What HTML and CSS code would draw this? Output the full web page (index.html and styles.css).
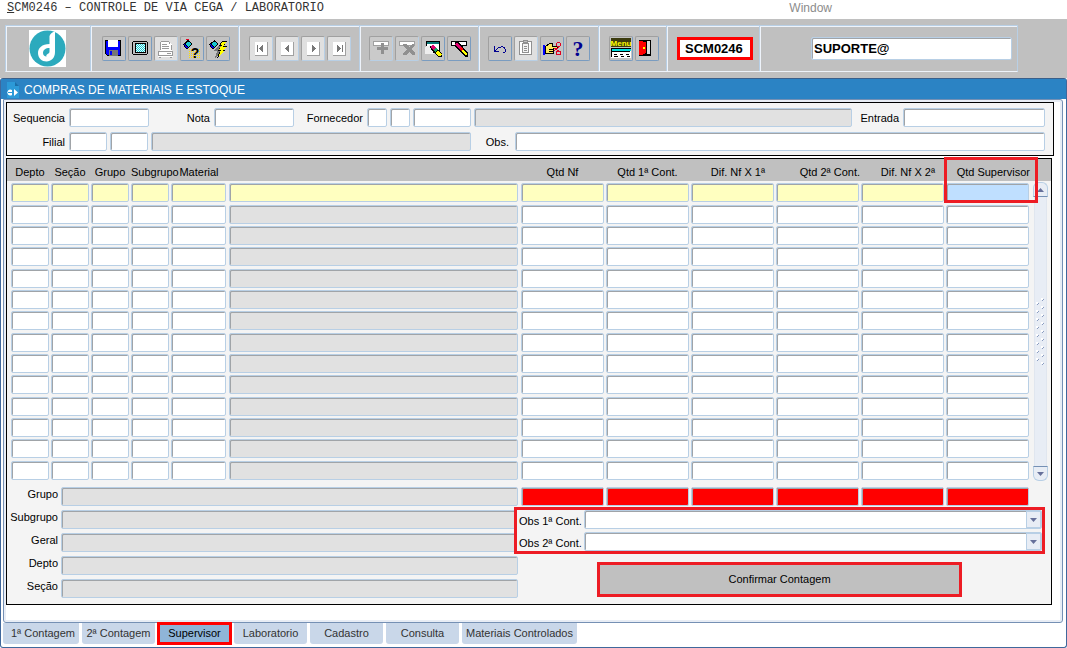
FILE: index.html
```html
<!DOCTYPE html>
<html lang="pt-BR">
<head>
	<meta charset="utf-8">
	<meta name="viewport" content="width=device-width, initial-scale=1">
	<title>SCM0246 - Controle de Via Cega / Laboratorio</title>
	<link rel="stylesheet" href="styles.css">
</head>
<body>

<header class="menubar">
	<a href="#main"><u>S</u>CM0246 – CONTROLE DE VIA CEGA / LABORATORIO</a>
	<a href="#window" class="menu-window">Window</a>
</header>

<div class="toolbar-area">
	<div class="toolbar">
		<div class="group group-logo">
			<svg class="logo" viewBox="0 0 37 37" role="img" aria-label="Logo">
				<circle cx="18.500" cy="18.500" r="18" fill="#2caabd"/>
				<path d="M20.500 6c1-2.500 3-4 5.500-4.500V22c0 6-4 9.500-8.500 9.500S9 28 9 23s4-9 11.500-9z" fill="#fff"/>
				<path d="M20.500 18c-4 0-6.500 2-6.500 5 0 2 1.500 3.500 3.500 3.500-1-3 3-2 3-5z" fill="#2caabd"/>
			</svg>
		</div>

		<div class="group">
			<button class="tool" aria-label="Salvar">
				<svg viewBox="0 0 24 25">
					<path d="M3 4h16v16H5l-2-2z" fill="#000"/>
					<path d="M4 5h14v14H5l-1-1z" fill="#00f"/>
					<path d="M6 4h10v7H6z" fill="#fff"/>
					<path d="M7 14h9v6H7z" fill="#777"/>
					<path d="M8 15h2v4H8z" fill="#00f"/>
				</svg>
			</button>
			<button class="tool" aria-label="Tela">
				<svg viewBox="0 0 24 25">
					<path d="M5 5h14v1h1v12h-1v1H5v-1H4V6h1z" fill="#000"/>
					<path d="M5 6h14v12H5z" fill="#c0c0c0"/>
					<path d="M7 7h11v10H7z" fill="#000"/>
					<path d="M8 8h9v8H8z" fill="#e8ffff"/>
					<path d="M8 8.500h9M8 10.500h9M8 12.500h9M8 14.500h9" stroke="#18c8d0" stroke-dasharray="1 1"/>
					<path d="M9 9.500h8M9 11.500h8M9 13.500h8M9 15.500h8" stroke="#18c8d0" stroke-dasharray="1 1"/>
				</svg>
			</button>
			<button class="tool tool-off" disabled aria-label="Imprimir">
				<svg viewBox="0 0 24 25">
					<path d="M7 6h8l3 3v6H6V6z" fill="#fff"/>
					<path d="M7 5.500h8M15.500 6v2M17.500 9v5M6.500 6v8M8 8.500h5M8 10.500h7M8 12.500h7" stroke="#999"/>
					<path d="M4 15h15v6H4z" fill="#fff"/>
					<path d="M4.500 15.500h14v4h-14zM5 21.500h2M16 21.500h2M13 17.500h4" stroke="#999" fill="none"/>
				</svg>
			</button>
			<button class="tool" aria-label="Entrar consulta">
				<svg viewBox="0 0 24 25">
					<path d="M9 13.500h12M9 15.500h12M9 17.500h12M9 19.500h12M9 21.500h12" stroke="#ffe000" stroke-dasharray="1 1"/>
					<path d="M3 8l5-4 4 4-4 5H6z" fill="#000"/>
					<path d="M4 8l4 4H6z" fill="#00f"/>
					<path d="M7 6h3l1 2-3 3-2-2z" fill="#18c8d0"/>
					<path d="M6 3h3v1H6z" fill="#e00020"/>
					<text x="15" y="22" class="glyph query">?</text>
				</svg>
			</button>
			<button class="tool" aria-label="Executar consulta">
				<svg viewBox="0 0 24 25">
					<path d="M3 8l6-4 3 4-4 5H6z" fill="#000"/>
					<path d="M4 8l4 4H6z" fill="#00f"/>
					<path d="M7 6h3l1 2-3 3-2-2z" fill="#18c8d0"/>
					<path d="M12 10l4-2-2 6h3l-8 8 2-7H8z" fill="#777"/>
					<path d="M16 5h5l-3 5h3l-3 4h2l-9 8 3-7h-2l3-5h-2z" fill="#000"/>
					<path d="M16 6h4l-3 5h3l-3 4h2l-6 5 2-6h-2l3-5h-1z" fill="#ff0"/>
				</svg>
			</button>
		</div>

		<div class="group group-nav">
			<button class="tool tool-off" disabled aria-label="Primeiro">
				<svg viewBox="0 0 24 25">
					<path d="M6 6h12v13H6z" fill="#fff"/><path d="M6 19.500h12.500V6" stroke="#a0a0a0" fill="none"/>
					<path d="M8 9h1v7H8zM14 9v7l-4-3.500z" fill="#777"/>
				</svg>
			</button>
			<button class="tool tool-off" disabled aria-label="Anterior">
				<svg viewBox="0 0 24 25">
					<path d="M6 6h12v13H6z" fill="#fff"/><path d="M6 19.500h12.500V6" stroke="#a0a0a0" fill="none"/>
					<path d="M14 9v7l-4-3.500z" fill="#777"/>
				</svg>
			</button>
			<button class="tool tool-off" disabled aria-label="Próximo">
				<svg viewBox="0 0 24 25">
					<path d="M6 6h12v13H6z" fill="#fff"/><path d="M6 19.500h12.500V6" stroke="#a0a0a0" fill="none"/>
					<path d="M11 9v7l4-3.500z" fill="#777"/>
				</svg>
			</button>
			<button class="tool tool-off" disabled aria-label="Último">
				<svg viewBox="0 0 24 25">
					<path d="M6 6h12v13H6z" fill="#fff"/><path d="M6 19.500h12.500V6" stroke="#a0a0a0" fill="none"/>
					<path d="M10 9v7l4-3.500zM15 9h1v7h-1z" fill="#777"/>
				</svg>
			</button>
		</div>

		<div class="group group-record">
			<button class="tool tool-off tool-flat" disabled aria-label="Inserir registro">
				<svg viewBox="0 0 24 25">
					<path d="M4.500 5.500h15v4h-15z" fill="#fff" stroke="#a0a0a0"/>
					<path d="M12 7h3v4h4v3h-4v4h-3v-4H8v-3h4z" fill="#909090"/>
				</svg>
			</button>
			<button class="tool tool-off tool-flat" disabled aria-label="Excluir registro">
				<svg viewBox="0 0 24 25">
					<path d="M4.500 5.500h15v4h-15z" fill="#fff" stroke="#a0a0a0"/>
					<path d="M8 8h3l3 3 3-3h2v2l-3 3 4 4v2h-3l-3-3-3 3H8v-2l4-4-4-3z" fill="#909090"/>
				</svg>
			</button>
			<button class="tool" aria-label="Limpar bloco">
				<svg viewBox="0 0 24 25">
					<path d="M5.500 5.500h13v11h-13z" fill="#fff" stroke="#000"/>
					<path d="M6 6h12v2H6z" fill="#087878"/>
					<path d="M4 11l5-2 4 9H4z" fill="#eee"/>
					<path d="M9 10l3-1 9 9v3h-4l-7-8z" fill="#000"/>
					<path d="M9 11l3 3 3-2-3-3z" fill="#e00070"/>
					<path d="M12 14l3-2 2 2-3 2z" fill="#18a060"/>
					<path d="M14 17l3-3 4 5-3 1z" fill="#ff0"/>
				</svg>
			</button>
			<button class="tool" aria-label="Limpar registro">
				<svg viewBox="0 0 24 25">
					<path d="M4.500 5.500h15v4h-15z" fill="#fff" stroke="#000"/>
					<path d="M8 6h4l9 11v4h-3L8 10z" fill="#000"/>
					<path d="M9 7h2l3 4-2 2-4-4z" fill="#e00070"/>
					<path d="M12 13l2-2 2 2-2 2z" fill="#f00"/>
					<path d="M14 15l2-2 4 5-1 2z" fill="#ff0"/>
				</svg>
			</button>
		</div>

		<div class="group group-edit">
			<button class="tool" aria-label="Desfazer">
				<svg viewBox="0 0 24 25">
					<path d="M6.500 10v6M6 15.500h5M7 15l3-3c3-2 7-1 7 1v3l-2 1" stroke="#000090" fill="none"/>
				</svg>
			</button>
			<button class="tool tool-off" disabled aria-label="Colar">
				<svg viewBox="0 0 24 25">
					<path d="M5.500 5.500h12v13h-12z" fill="#fff" stroke="#909090"/>
					<path d="M8.500 7.500h6v9h-6z" fill="#f4f4f4" stroke="#909090"/>
					<path d="M9.500 4.500h4v2h-4z" fill="#c0c0c0" stroke="#909090"/>
					<path d="M10 10.500h3M10 12.500h3M10 14.500h3" stroke="#909090"/>
				</svg>
			</button>
			<button class="tool" aria-label="Recortar">
				<svg viewBox="0 0 24 25">
					<path d="M3 9h2v10H3z" fill="#00f"/>
					<path d="M5.500 10.500l4-3h3v3h5v2h-4v5h-8z" fill="#ffe860" stroke="#000"/>
					<path d="M9 13.500h4M9 15.500h4" stroke="#000"/>
					<path d="M14 12l5 3M14 15l5-4" stroke="#e00020"/>
					<circle cx="18.500" cy="8.500" r="2" fill="none" stroke="#e00020"/>
					<circle cx="18.500" cy="17" r="2" fill="none" stroke="#e00020"/>
				</svg>
			</button>
			<button class="tool" aria-label="Ajuda">
				<svg viewBox="0 0 24 25">
					<text x="12" y="20" class="glyph help">?</text>
				</svg>
			</button>
		</div>

		<div class="group group-exit">
			<button class="tool" aria-label="Menu">
				<svg viewBox="0 0 24 25">
					<path d="M2 2h20v9H2z" fill="#3c3c10"/>
					<text x="12" y="10" class="glyph menu">Menu</text>
					<path d="M2 12h20v10H2z" fill="#fff"/>
					<path d="M2 12.500h20M2.500 12v9" stroke="#000"/>
					<path d="M3 14h19" stroke="#00e0e0" stroke-width="2"/>
					<path d="M3 15.500h18M5 18.500h3M11 18.500h3M17 18.500h3M5 20.500h4M12 20.500h3M18 20.500h3" stroke="#000"/>
				</svg>
			</button>
			<button class="tool" aria-label="Sair">
				<svg viewBox="0 0 24 25">
					<path d="M4 4h12v16H4z" fill="#000"/>
					<path d="M5 5h10v13H5z" fill="#ddd"/>
					<path d="M4 5l8-1v14l-5 2H4z" fill="#000"/>
					<path d="M4 5l7 1v11l-4 2H4z" fill="#f00"/>
					<path d="M8 11h2v2H8z" fill="#ff0"/>
				</svg>
			</button>
		</div>

		<div class="group group-code">
			<input class="code" value="SCM0246" aria-label="Programa">
		</div>

		<div class="group group-user">
			<input class="user" value="SUPORTE@" aria-label="Usuário">
		</div>
	</div>
</div>

<main class="window" id="main">
	<h1 class="titlebar">
		<svg viewBox="0 0 14 16" aria-hidden="true">
			<path d="M1 0h8l4 4v12H1z" fill="#2c9ad8"/>
			<path d="M9 0v4h4" fill="#1b6ea8"/>
			<path d="M8 7v7l4-3.500zM6 8a3 3 0 1 0 0 5" fill="#fff"/>
			<path d="M2 10.500h5" stroke="#2c9ad8"/>
		</svg>
		COMPRAS DE MATERIAIS E ESTOQUE
	</h1>

	<div class="canvas">
		<section class="panel panel-head">
			<div class="line">
				<label class="first" for="sequencia">Sequencia</label>
				<input class="w80" id="sequencia">
				<label class="nota" for="nota">Nota</label>
				<input class="w80" id="nota">
				<label class="fornecedor" for="fornecedor">Fornecedor</label>
				<input class="w20" id="fornecedor">
				<input class="w20" aria-label="Fornecedor loja">
				<input class="w58" aria-label="Fornecedor código">
				<input class="grow ro" readonly aria-label="Fornecedor nome">
				<label class="entrada" for="entrada">Entrada</label>
				<input class="w142" id="entrada">
			</div>
			<div class="line">
				<label class="first" for="filial">Filial</label>
				<input class="w38" id="filial">
				<input class="w38" aria-label="Filial código">
				<input class="w320 ro" readonly aria-label="Filial nome">
				<label class="obs" for="obs">Obs.</label>
				<input class="grow" id="obs">
			</div>
		</section>

		<section class="panel panel-items">
			<div class="items">
				<table>
					<colgroup>
						<col class="c-depto"><col class="c-code"><col class="c-code"><col class="c-code">
						<col class="c-material"><col>
						<col class="c-qtd"><col class="c-qtd"><col class="c-qtd"><col class="c-qtd"><col class="c-qtd"><col class="c-qtd">
					</colgroup>
					<thead>
						<tr>
							<th>Depto</th>
							<th>Seção</th>
							<th>Grupo</th>
							<th>Subgrupo</th>
							<th>Material</th>
							<th></th>
							<th>Qtd Nf</th>
							<th>Qtd 1ª Cont.</th>
							<th class="dif">Dif. Nf X 1ª</th>
							<th class="end">Qtd 2ª Cont.</th>
							<th class="dif">Dif. Nf X 2ª</th>
							<th class="end marked">Qtd Supervisor</th>
						</tr>
					</thead>
					<tbody id="rows"></tbody>
				</table>
				<div class="scroll">
					<div class="scroll-head"></div>
					<button class="scroll-btn up" aria-label="Subir"><svg viewBox="0 0 7 4"><path d="M0 4h7L3.500 0z"/></svg></button>
					<div class="track">
						<svg viewBox="0 0 9 68" aria-hidden="true">
							<defs>
								<pattern id="grip" width="9" height="8" patternUnits="userSpaceOnUse">
									<path d="M5 0h2v2H5zM0 4h2v2H0z" fill="#fff"/>
									<path d="M6 2h1V1h1v1H7v1H6zM1 6h1V5h1v1H2v1H1z" fill="#8a9cc0"/>
								</pattern>
							</defs>
							<rect width="9" height="68" fill="url(#grip)"/>
						</svg>
					</div>
					<button class="scroll-btn down" aria-label="Descer"><svg viewBox="0 0 7 4"><path d="M0 0h7L3.500 4z"/></svg></button>
				</div>
			</div>

			<div class="footer">
				<div class="names">
					<label for="n-grupo">Grupo</label><input class="ro" readonly id="n-grupo">
					<label for="n-subgrupo">Subgrupo</label><input class="ro" readonly id="n-subgrupo">
					<label for="n-geral">Geral</label><input class="ro" readonly id="n-geral">
					<label for="n-depto">Depto</label><input class="ro" readonly id="n-depto">
					<label for="n-secao">Seção</label><input class="ro" readonly id="n-secao">
				</div>
				<div class="side">
					<div class="totals">
						<input readonly aria-label="Total Qtd Nf">
						<input readonly aria-label="Total Qtd 1ª Cont.">
						<input readonly aria-label="Total Dif. Nf X 1ª">
						<input readonly aria-label="Total Qtd 2ª Cont.">
						<input readonly aria-label="Total Dif. Nf X 2ª">
						<input readonly aria-label="Total Qtd Supervisor">
					</div>
					<div class="notes">
						<label for="obs1">Obs 1ª Cont.</label>
						<div class="combo">
							<select id="obs1"><option></option></select>
							<span class="arrow"><svg viewBox="0 0 7 4"><path d="M0 0h7L3.500 4z"/></svg></span>
						</div>
						<label for="obs2">Obs 2ª Cont.</label>
						<div class="combo">
							<select id="obs2"><option></option></select>
							<span class="arrow"><svg viewBox="0 0 7 4"><path d="M0 0h7L3.500 4z"/></svg></span>
						</div>
					</div>
					<button class="confirm">Confirmar Contagem</button>
				</div>
			</div>
		</section>
	</div>

	<nav class="tabs">
		<button>1ª Contagem</button>
		<button>2ª Contagem</button>
		<button class="active">Supervisor</button>
		<button>Laboratorio</button>
		<button>Cadastro</button>
		<button>Consulta</button>
		<button>Materiais Controlados</button>
	</nav>
</main>

<script src="rows.js"></script>

</body>
</html>
```

FILE: rows.js
```javascript
var ROWS = 14;
var names = ["Depto", "Seção", "Grupo", "Subgrupo", "Material", "Descrição", "Qtd Nf",
	"Qtd 1ª Cont.", "Dif. Nf X 1ª", "Qtd 2ª Cont.", "Dif. Nf X 2ª", "Qtd Supervisor"];
var body = document.getElementById("rows");

for (var r = 1; r <= ROWS; r++) {
	var tr = body.insertRow();
	names.forEach(function(name, i) {
		var input = document.createElement("input");
		input.setAttribute("aria-label", name + " " + r);
		if (i === 5) {
			input.className = "ro";
			input.readOnly = true;
		}
		tr.insertCell().appendChild(input);
	});
}
```

FILE: styles.css
```css
*, *::after {
	box-sizing: border-box;
}
body {
	margin: 0;
	background: white;
	color: #000;
	font: 11px/15px "Liberation Sans", Arial, sans-serif;
}
button, input, select {
	font: inherit;
	color: inherit;
	margin: 0;
}
svg {
	display: block;
}

/* fields */

input, select {
	height: 19px;
	min-width: 0;
	padding: 0 3px;
	border: 1px solid #b8cfe5;
	border-radius: 2px;
	background: white;
	box-shadow: inset 1px 1px 0 #a0a4a8;
	outline: none;
}
.ro {
	background: #e1e1e1;
}

/* menu bar */

.menubar {
	display: flex;
	justify-content: space-between;
	height: 19px;
	padding: 0 235px 0 7px;
}
.menubar a {
	color: #333;
	text-decoration: none;
	font: 12px/17px "Liberation Mono", "Courier New", monospace;
}
.menubar .menu-window {
	color: #8c8c8c;
	font-family: "Liberation Sans", Arial, sans-serif;
}

/* toolbar */

.toolbar-area {
	padding: 6px 49px 6px 5px;
	background: #c0c0c0;
}
.toolbar {
	display: flex;
	height: 47px;
	border: 1px solid #b8cfe5;
	border-bottom-color: #eef3fa;
	box-shadow: inset 1px 1px 0 #eef3fa;
}
.group {
	display: flex;
	align-items: center;
	gap: 2px;
	padding: 0 9px 0 10px;
	border-right: 1px solid #eef3fa;
	box-shadow: inset -1px 0 0 #b8cfe5;
}
.group-logo {
	width: 86px;
	padding: 0 0 0 23px;
}
.group-nav {
	padding: 0 9px;
}
.group-record {
	padding: 0 8px;
}
.group-edit {
	padding: 0 9px 0 8px;
}
.group-exit {
	padding: 0 8px 0 9px;
}
.group-code {
	width: 93px;
	padding: 0 7px 0 9px;
}
.group-user {
	flex: 1;
	padding: 0 5px 0 50px;
	border: 0;
	box-shadow: none;
}
.logo {
	width: 37px;
	height: 37px;
	background: white;
}
.tool {
	width: 24px;
	height: 25px;
	padding: 0;
	border: 1px solid #a0a0a0;
	border-right-color: #7a9cc0;
	border-bottom-color: #7a9cc0;
	border-radius: 2px;
	background: #c4c4c4;
}
.tool svg {
	width: 24px;
	height: 25px;
	margin: -1px;
	shape-rendering: crispEdges;
}
.tool-off {
	border-right-color: #b8cfe5;
	border-bottom-color: #b8cfe5;
	background: #e0e0e0;
}
.tool-flat {
	background: #cacaca;
}
.glyph {
	font-weight: bold;
	text-anchor: middle;
}
.query {
	font-size: 14px;
}
.help {
	font-family: "Liberation Serif", "Times New Roman", serif;
	font-size: 22px;
	fill: #000090;
}
.menu {
	font-size: 8px;
	fill: #ff0;
}
.code, .user {
	width: 100%;
	height: 23px;
	font-size: 13px;
	font-weight: bold;
}
.user {
	padding: 0 2px;
}
.code {
	padding: 0 5px;
	border: 3px solid #f00;
	border-radius: 0;
	box-shadow: none;
}

/* window */

.window {
	padding: 0 3px 3px 2px;
	border: 1px solid #40689c;
	border-top-color: #3a5f8a;
	border-radius: 3px;
}
.titlebar {
	display: flex;
	align-items: center;
	gap: 4px;
	height: 20px;
	margin: 0 -3px 0 -2px;
	padding: 2px 0 0 5px;
	background: #2b83c4;
	color: white;
	font-size: 12px;
	font-weight: normal;
}
.titlebar svg {
	width: 14px;
	height: 16px;
}
.canvas {
	padding: 2px 8px 17px 2px;
	border: 1px solid #7590b4;
	border-radius: 0 3px 3px 3px;
	box-shadow: inset 0 0 0 2px #e8edf5;
}
.panel {
	border: 1px solid #000;
	background: #f4f4f4;
}
.panel-head {
	display: grid;
	gap: 5px;
	padding: 5px 8px 4px 0;
}
.line {
	display: flex;
	gap: 3px;
}
.line label {
	height: 19px;
	line-height: 21px;
	text-align: right;
	padding-right: 1px;
}
.line .first { width: 59px; }
.line .nota { width: 59px; }
.line .fornecedor { width: 67px; }
.line .entrada { width: 45px; }
.line .obs { width: 38px; padding-right: 3px; }
.w20 { width: 20px; }
.w38 { width: 38px; }
.w58 { width: 58px; }
.w80 { width: 80px; }
.w142 { width: 142px; }
.w320 { width: 320px; }
.grow { flex: 1; }

/* items */

.panel-items {
	margin: 2px 2px 0 0;
	padding-bottom: 6px;
}
.items {
	display: flex;
}
table {
	flex: 1;
	width: 0;
	table-layout: fixed;
	border-collapse: collapse;
}
.c-depto { width: 44px; }
.c-code { width: 40px; }
.c-material { width: 58px; }
.c-qtd { width: 85px; }
th {
	height: 22px;
	padding: 5px 2px 0 0;
	background: #c0c0c0;
	font-weight: normal;
	line-height: 17px;
	white-space: nowrap;
}
th:first-child, td:first-child {
	padding-left: 4px;
}
th.dif {
	padding-right: 11px;
	text-align: right;
}
th.end {
	padding-right: 1px;
	text-align: right;
}
/* frame round the supervisor heading and its first field */
.marked {
	position: relative;
}
.marked::after {
	content: "";
	position: absolute;
	top: -2px;
	left: -2px;
	right: -7px;
	height: 46px;
	border: 3px solid #ed1c24;
	pointer-events: none;
}
td {
	padding: 0 2px 0 0;
	vertical-align: top;
}
td:nth-child(5), td:nth-child(6) {
	padding-right: 3px;
}
td input {
	display: block;
	width: 100%;
}
tbody tr {
	height: 21px;
}
tbody tr:nth-child(3n+1) {
	height: 22px;
}
tbody tr:first-child {
	height: 24px;
}
tbody tr:first-child td {
	padding-top: 2px;
}
tbody tr:first-child input {
	background: #ffffc0;
}
tbody tr:first-child td:last-child input {
	background: #bfdfff;
}

.scroll {
	display: flex;
	flex-direction: column;
	width: 20px;
	padding-bottom: 1px;
}
.scroll-head {
	height: 22px;
	margin-bottom: 1px;
	background: #c0c0c0;
}
.scroll-btn {
	display: grid;
	place-items: center;
	width: 15px;
	height: 15px;
	margin-left: 2px;
	padding: 0;
	border: 1px solid #b8cfe5;
	background: #e8edf5;
}
.scroll-btn svg, .arrow svg {
	width: 7px;
	height: 4px;
	fill: #66709a;
}
.up {
	border-bottom-color: #7590b4;
	border-radius: 6px 6px 0 0;
}
.down {
	border-top-color: #7590b4;
	border-radius: 0 0 6px 6px;
}
.track {
	flex: 1;
	display: grid;
	place-items: center;
	width: 13px;
	margin-left: 3px;
	border: 1px solid #e0e6ef;
	border-width: 0 1px;
	background: #e8edf5;
}
.track svg {
	width: 9px;
	height: 68px;
}

/* footer */

.footer {
	display: flex;
	padding-top: 5px;
}
.names {
	flex: 1;
	display: grid;
	grid-template-columns: 51px 1fr;
	gap: 4px 3px;
	align-content: start;
	padding-right: 3px;
}
.names label {
	text-align: right;
}
.side {
	width: 530px;
}
.totals {
	display: flex;
	gap: 2px;
}
.totals input {
	width: 83px;
	background: #f00;
}
.notes {
	position: relative;
	display: grid;
	grid-template-columns: 64px 1fr;
	gap: 3px 1px;
	margin: 1px 6px 0 -7px;
	padding-left: 2px;
	border: 3px solid #ed1c24;
	background: #f4f4f4;
}
.notes label {
	line-height: 22px;
}
.notes label, .combo {
	height: 19px;
}
.combo {
	position: relative;
}
.combo select {
	display: block;
	width: 100%;
	appearance: none;
}
.arrow {
	position: absolute;
	top: 1px;
	right: 1px;
	bottom: 1px;
	display: grid;
	place-items: center;
	width: 15px;
	border: 1px solid #b8cfe5;
	background: #e8edf5;
	pointer-events: none;
}
.confirm {
	display: block;
	width: 365px;
	height: 35px;
	margin: 8px 0 0 76px;
	border: 3px solid #ed1c24;
	background: #c0c0c0;
}

/* tabs */

.tabs {
	display: flex;
	gap: 3px;
}
.tabs button {
	min-width: 73px;
	height: 21px;
	padding: 0 4px;
	border: 0;
	border-radius: 0 0 3px 3px;
	background: #c9d7e9;
	color: #333;
}
.tabs button:first-child {
	min-width: 76px;
	padding-left: 8px;
}
.tabs .active {
	background: #8fb5d8;
	color: #000;
	outline: 3px solid #f00;
	outline-offset: -2px;
	border-radius: 0;
}
```
